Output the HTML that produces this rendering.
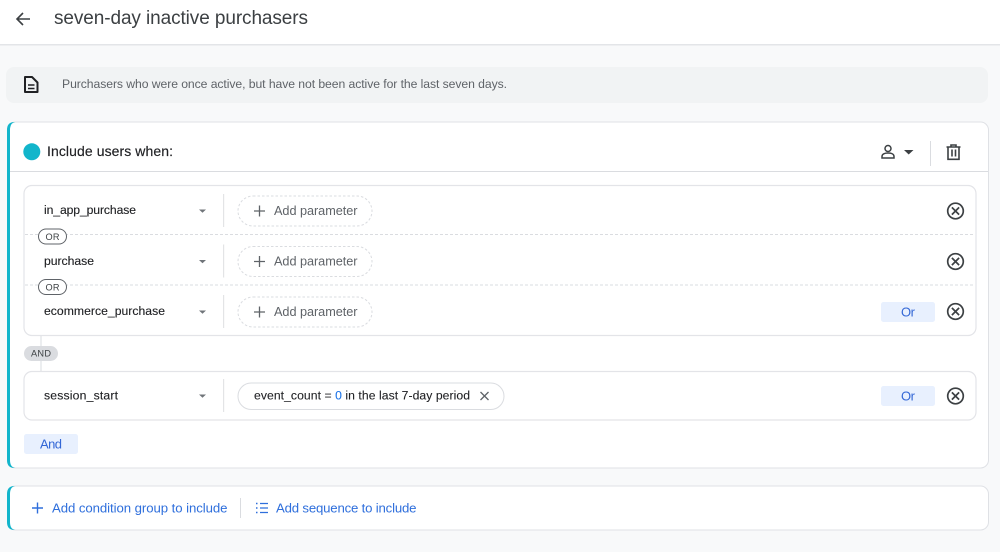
<!DOCTYPE html>
<html><head><meta charset="utf-8"><style>
html,body{margin:0;padding:0;width:1000px;height:552px;overflow:hidden;background:#f8f9fa}
svg{display:block}
text{font-family:"Liberation Sans",sans-serif}
.ev{font-size:12.200px;fill:#202124;stroke:#202124;stroke-width:.12}
.ap{font-size:12.700px;fill:#5f6368}
.bl{font-size:13.200px;fill:#2f6fdc}
.sm{font-size:9.200px;fill:#3c4043}
.btn{font-size:13px;fill:#3367d6}
</style></head><body>
<svg width="1000" height="552" viewBox="0 0 1000 552" xmlns="http://www.w3.org/2000/svg">
<defs>
<g id="xc" fill="none" stroke="#3c4043" stroke-width="1.700"><circle cx="0" cy="0" r="7.800"/><path d="M-3.600-3.600 3.600 3.600M3.600-3.600-3.600 3.600"/></g>
<path id="car" d="M-3.500-1.500H3.500L0 1.800Z" fill="#70757a"/>
<g id="plus" stroke="#5f6368" stroke-width="1.300"><path d="M-5.500 0H5.500M0-5.500V5.500"/></g>
</defs>
<rect width="1000" height="552" fill="#f8f9fa"/>
<rect width="1000" height="44.500" fill="#fff"/>
<rect y="44" width="1000" height="1.500" fill="#e3e5e8"/>
<path d="M30 19H17M23 13 17 19 23 25" fill="none" stroke="#3c4043" stroke-width="1.600"/>
<text x="54" y="24" font-size="19" fill="#3c4043" textLength="254">seven-day inactive purchasers</text>

<rect x="6" y="67" width="982" height="36" rx="8" fill="#f1f3f4"/>
<path d="M25 77H32L37.500 82.500V92H25Z" fill="none" stroke="#202124" stroke-width="2" stroke-linejoin="round"/>
<path d="M28 85H34.500M28 88.500H34.500" stroke="#202124" stroke-width="1.500"/>
<text x="62" y="88" font-size="12.200" fill="#5f6368" textLength="445">Purchasers who were once active, but have not been active for the last seven days.</text>

<rect x="7.500" y="122" width="981" height="346" rx="8" fill="#fff" stroke="#dfe1e5"/>
<path d="M15 122H14.500Q7 122 7 130V460Q7 468 14.500 468H15Q10 467 10 460V130Q10 123 15 122Z" fill="#12b5cb"/>
<rect x="10" y="171" width="978" height="1" fill="#dadce0"/>
<circle cx="31.800" cy="151.800" r="8.500" fill="#12b5cb"/>
<text x="47" y="156" font-size="14" fill="#202124" stroke="#202124" stroke-width=".15" textLength="126">Include users when:</text>
<g fill="none" stroke="#3c4043" stroke-width="1.500"><circle cx="888" cy="148.500" r="3"/><path d="M882 158V156.500C882 154 885 153 888 153S894 154 894 156.500V158Z"/></g>
<path d="M904 150H913.500L908.700 154.500Z" fill="#3c4043"/>
<rect x="930" y="141" width="1" height="25" fill="#dadce0"/>
<g fill="none" stroke="#3c4043" stroke-width="1.600"><path d="M946.500 147H960.500M951 147V145H956V147M948 147V159.300H959V147M952 149.500V156.500M955.500 149.500V156.500"/></g>

<rect x="24" y="185.500" width="952" height="150" rx="8" fill="#fff" stroke="#e3e4e8" stroke-width="1.200"/>
<path d="M25 234.500H975M25 285H975" stroke="#dadce0" stroke-dasharray="3 2"/>
<g fill="#fff" stroke="#5f6368"><rect x="38.500" y="229" width="28" height="15" rx="7.500"/><rect x="38.500" y="279.500" width="28" height="15" rx="7.500"/></g>
<text class="sm" x="45.500" y="240" textLength="14">OR</text>
<text class="sm" x="45.500" y="290.500" textLength="14">OR</text>

<path d="M41 336V346M41 361V371" stroke="#dadce0"/>
<rect x="24" y="346" width="34" height="15" rx="7.500" fill="#dadce0"/>
<text class="sm" x="31" y="356.500" textLength="20">AND</text>

<rect x="24" y="371.500" width="952" height="48.500" rx="8" fill="#fff" stroke="#e3e4e8" stroke-width="1.200"/>

<text class="ev" x="44" y="214" textLength="92">in_app_purchase</text>
<text class="ev" x="44" y="265" textLength="50">purchase</text>
<text class="ev" x="44" y="315" textLength="121">ecommerce_purchase</text>
<text class="ev" x="44" y="399.500" textLength="74">session_start</text>
<use href="#car" x="202.500" y="211"/><use href="#car" x="202.500" y="261.500"/><use href="#car" x="202.500" y="312"/><use href="#car" x="202.500" y="396"/>
<g fill="#e3e4e6"><rect x="223" y="194" width="1.200" height="33"/><rect x="223" y="244.500" width="1.200" height="33"/><rect x="223" y="295" width="1.200" height="33"/><rect x="223" y="379" width="1.200" height="33"/></g>

<g fill="#fff" stroke="#dadce0" stroke-dasharray="2.500 2"><rect x="238" y="196" width="134" height="30" rx="15"/><rect x="238" y="246.500" width="134" height="30" rx="15"/><rect x="238" y="297" width="134" height="30" rx="15"/></g>
<use href="#plus" x="259.500" y="211"/><use href="#plus" x="259.500" y="261.500"/><use href="#plus" x="259.500" y="312"/>
<text class="ap" x="274" y="215" textLength="83.500">Add parameter</text>
<text class="ap" x="274" y="265.500" textLength="83.500">Add parameter</text>
<text class="ap" x="274" y="316" textLength="83.500">Add parameter</text>

<use href="#xc" x="955.500" y="211"/><use href="#xc" x="955.500" y="261.500"/><use href="#xc" x="955.500" y="311.500"/><use href="#xc" x="955.500" y="396"/>
<g fill="#e8f0fe"><rect x="881" y="302" width="54" height="20" rx="2.500"/><rect x="881" y="386" width="54" height="20" rx="2.500"/><rect x="24" y="434" width="54" height="20" rx="2.500"/></g>
<text class="btn" x="901" y="316.500" textLength="14">Or</text>
<text class="btn" x="901" y="400.500" textLength="14">Or</text>
<text class="btn" x="40" y="448.500" textLength="22">And</text>

<rect x="238" y="383" width="266" height="26.500" rx="13.250" fill="#fff" stroke="#dadce0"/>
<text x="254" y="399.500" font-size="12.200" fill="#202124" stroke="#202124" stroke-width=".08" textLength="216">event_count = <tspan fill="#1a73e8" stroke="#1a73e8">0</tspan> in the last 7-day period</text>
<path d="M480.500 392 488.500 400M488.500 392 480.500 400" stroke="#5f6368" stroke-width="1.300"/>

<rect x="7.500" y="486" width="981" height="44" rx="8" fill="#fff" stroke="#dfe1e5"/>
<path d="M15 486H14.500Q7 486 7 494V522Q7 530 14.500 530H15Q10 529 10 522V494Q10 487 15 486Z" fill="#12b5cb"/>
<path d="M32 508H43M37.500 502.500V513.500" stroke="#2f6fdc" stroke-width="1.400"/>
<text class="bl" x="52" y="512.500" textLength="175.500">Add condition group to include</text>
<rect x="240" y="498" width="1" height="20" fill="#dadce0"/>
<path d="M260 503.500H268M260 508H268M260 512.500H268" stroke="#2f6fdc" stroke-width="1.200"/>
<path d="M256 503.500H258M256 508H258M256 512.500H258" stroke="#2f6fdc" stroke-width="1.500" stroke-dasharray="1 .5"/>
<text class="bl" x="276" y="512.500" textLength="140.500">Add sequence to include</text>
</svg>
</body></html>
